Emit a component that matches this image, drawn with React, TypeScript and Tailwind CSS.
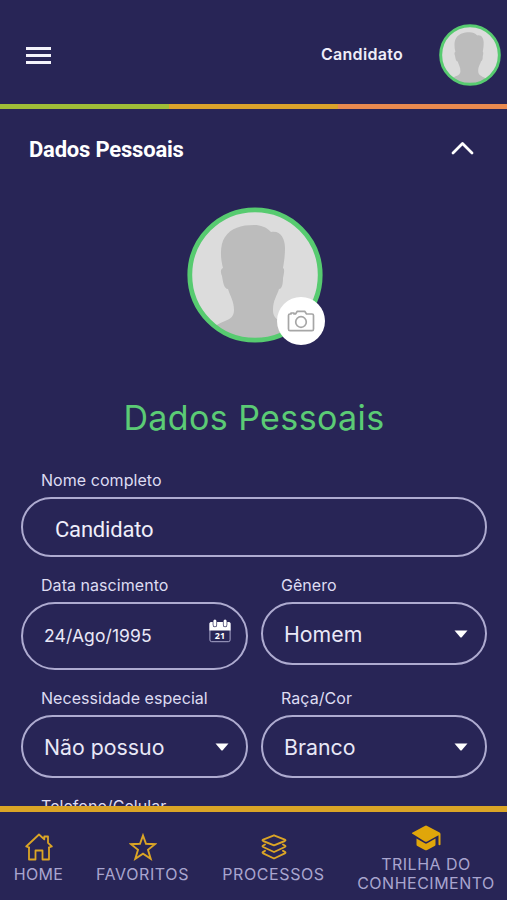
import React from "react";

const inter = "font-['Inter','Liberation_Sans',sans-serif]";
const roboto = "font-['Roboto','Liberation_Sans',sans-serif]";

function Avatar({ className, ring }: { className: string; ring: number }) {
  return (
    <svg className={className} viewBox="0 0 136 136" fill="none">
      <defs>
        <clipPath id="face">
          <circle cx="68" cy="68" r="64" />
        </clipPath>
      </defs>
      <circle cx="68" cy="68" r="65" fill="#dcdcdc" />
      <path
        clipPath="url(#face)"
        fill="#bcbcbc"
        d="M25 122C35 112 47 115 47 103C47 94 43 89 41 82C37 82 36 75 35 69C33 64 34 62 36 61C33 50 33 37 38 30C44 21 54 18 67 18C74 18 79 20 84 25C93 23 98 31 98 41C98 49 97 55 96 61C98 62 97 66 96 71C96 77 95 82 92 82C90 89 86 93 86 103C86 114 95 114 108 122V140H25Z"
      />
      <circle cx="68" cy="68" r={67.6 - ring / 2} stroke="#57cb70" strokeWidth={ring} />
    </svg>
  );
}

function Caret() {
  return (
    <svg className="h-2 w-[14px]" viewBox="0 0 14 8" fill="#fff">
      <path d="M.5.5H13.5L7.5 7.4Q7 7.8 6.5 7.4Z" />
    </svg>
  );
}

function Calendar() {
  return (
    <svg className="mb-[10px] h-[24px] w-[22px]" viewBox="0 0 22 24">
      <rect x=".9" y="3.5" width="20.2" height="19.2" rx="1.8" fill="none" stroke="#a9a6cb" strokeWidth="1" />
      <path d="M.5 11.4V4.6Q.5 3 2 3H20Q21.5 3 21.5 4.6V11.4Z" fill="#fff" />
      <path d="M5.9 2.5V6M16.1 2.5V6" stroke="#282556" strokeWidth="4.4" strokeLinecap="round" />
      <path d="M5.9 2V6M16.1 2V6" stroke="#fff" strokeWidth="3" strokeLinecap="round" />
      <text x="11" y="19.8" textAnchor="middle" fill="#fff" className="font-['Open_Sans',sans-serif] text-[9px] font-bold">21</text>
    </svg>
  );
}

function Label({ children, className = "" }: { children: React.ReactNode; className?: string }) {
  return <div className={`ml-5 h-5 text-[16px] leading-5 tracking-[0.05px] whitespace-nowrap text-[#dedcf2] ${className}`}>{children}</div>;
}

function Select({ value, className }: { value: string; className: string }) {
  return (
    <div className={`flex h-[63px] items-center justify-between rounded-full border-2 border-[#aeabd0] pr-[17px] pl-[21px] ${className}`}>
      <span className="text-[21.3px] leading-7 text-[#e9e8f7]">{value}</span>
      <Caret />
    </div>
  );
}

export default function App() {
  return (
    <div className={`flex h-[900px] w-[507px] flex-col overflow-hidden bg-[#282556] ${inter}`}>
      <header className="flex h-[104px] shrink-0 items-center pt-[6px] pr-[6px] pl-[26px]">
        <div className="flex w-[25px] flex-col gap-[4px]">
          <span className="h-[3px] bg-[#f4f3fb]" />
          <span className="h-[3px] bg-[#f4f3fb]" />
          <span className="h-[3px] bg-[#f4f3fb]" />
        </div>
        <span className="mb-[2px] ml-auto text-[16px] font-semibold tracking-[0.3px] text-[#eeedf9]">Candidato</span>
        <Avatar ring={6.5} className="ml-9 size-[62px]" />
      </header>
      <div className="grid h-[5px] shrink-0 grid-cols-3">
        <span className="bg-[#a0bd37]" />
        <span className="bg-[#dba32b]" />
        <span className="bg-[#e98a4f]" />
      </div>

      <main className="min-h-0 flex-1 overflow-hidden px-[21px]">
        <div className="flex h-[82px] items-center justify-between pr-[12px] pl-2">
          <h2 className={`mb-[2px] text-[22px] font-bold tracking-[-0.2px] text-white ${roboto}`}>Dados Pessoais</h2>
          <svg className="mb-1 h-[14px] w-[23px]" viewBox="0 0 23 14" fill="none" stroke="#fff" strokeWidth="2.8" strokeLinecap="round" strokeLinejoin="round">
            <path d="M2 12L11.5 2.5L21 12" />
          </svg>
        </div>

        <div className="mt-[16px] flex justify-center pl-[2px]">
          <div className="relative size-[136px]">
            <Avatar ring={4.8} className="size-[136px]" />
            <div className="absolute top-[90px] left-[90px] flex size-[48px] items-center justify-center rounded-full bg-white">
              <svg className="h-[22px] w-[28px]" viewBox="0 0 28 22" fill="none" stroke="#a6a6a6" strokeWidth="1.7" strokeLinejoin="round">
                <path d="M3 4H4V3H7V4H8.5L10.3 1.3H17.7L19.5 4H25Q26.5 4 26.5 5.5V19Q26.5 20.7 25 20.7H3Q1.5 20.7 1.5 19V5.5Q1.5 4 3 4Z" />
                <circle cx="14" cy="12" r="5.3" />
              </svg>
            </div>
          </div>
        </div>

        <h1 className="mt-[52px] pl-[1px] text-center text-[34px] leading-[46px] tracking-[0.4px] whitespace-nowrap text-[#5bcb75]">Dados Pessoais</h1>

        <Label className="mt-[29px]">Nome completo</Label>
        <div className={`mt-[7px] mr-[-1px] flex h-[60px] items-center rounded-full border-2 border-[#aeabd0] pt-[5px] pl-8 text-[22px] tracking-[-0.2px] text-[#efeefa] ${roboto}`}>
          Candidato
        </div>

        <div className="mt-[18px] grid h-[95px] grid-cols-[227px_226px] gap-x-[13px]">
          <div>
            <Label>Data nascimento</Label>
            <div className="mt-[7px] flex h-[68px] items-center justify-between rounded-full border-2 border-[#aeabd0] pr-[15px] pl-[21px]">
              <span className="text-[17.5px] tracking-[0.1px] text-[#e9e8f7]">24/Ago/1995</span>
              <Calendar />
            </div>
          </div>
          <div>
            <Label>Gênero</Label>
            <Select value="Homem" className="mt-[7px]" />
          </div>
        </div>

        <div className="mt-[18px] grid grid-cols-[227px_226px] gap-x-[13px]">
          <div>
            <Label>Necessidade especial</Label>
            <Select value="Não possuo" className="mt-[7px]" />
          </div>
          <div>
            <Label>Raça/Cor</Label>
            <Select value="Branco" className="mt-[7px]" />
          </div>
        </div>
        <Label className="mt-[18px]">Telefone/Celular</Label>
      </main>

      <nav className="flex h-[94px] shrink-0 items-start border-t-[6px] border-[#dba526] text-[16px] leading-[19px] tracking-[0.6px] whitespace-nowrap text-[#a9a5cf]">
        <div className="flex w-[77px] flex-col items-center pt-[21px]">
          <svg className="h-[28px] w-[28px]" viewBox="0 0 28 28" fill="none" stroke="#dba526" strokeWidth="1.8" strokeLinejoin="round" strokeLinecap="round">
            <path d="M4 14.5V26.5H10.5V17.5H17.5V26.5H24V14.5" />
            <path d="M4 14.5L1.2 13.5L14 1.5L19.3 6.3V3.5H23V9.8L26.8 13.5L24 14.5" />
          </svg>
          <span className="mt-1 tracking-[0.3px]">HOME</span>
        </div>
        <div className="flex w-[131px] flex-col items-center pt-[21px]">
          <svg className="h-[28px] w-[28px]" viewBox="0 0 28 28" fill="none" stroke="#dba526" strokeWidth="1.9">
            <path d="M14 2.5L17 10.8L26 11.2L19 16.8L21.7 25.8L14 20.7L6.3 25.8L9 16.8L2 11.2L11 10.8Z" />
          </svg>
          <span className="mt-1">FAVORITOS</span>
        </div>
        <div className="flex w-[131px] flex-col items-center pt-[21px]">
          <svg className="h-[28px] w-[28px]" viewBox="0 0 28 28" fill="none" stroke="#dba526" strokeWidth="1.9" strokeLinejoin="round" strokeLinecap="round">
            <path d="M14 2.3L24.8 6.6Q26.2 7.3 24.8 8L14 12.4L3.2 8Q1.8 7.3 3.2 6.6Z" />
            <path d="M5 11.5L3.2 12.5Q1.8 13.3 3.2 14L14 19L24.8 14Q26.2 13.3 24.8 12.5L23 11.5" />
            <path d="M5 17.8L3.2 18.8Q1.8 19.6 3.2 20.3L14 25.5L24.8 20.3Q26.2 19.6 24.8 18.8L23 17.8" />
          </svg>
          <span className="mt-1">PROCESSOS</span>
        </div>
        <div className="flex flex-1 flex-col items-center pt-[12px] pl-[6px] text-center">
          <svg className="h-[28px] w-[30px]" viewBox="0 0 30 28" fill="#e0a60a">
            <path d="M1 9.5Q.7 9.2 1.2 8.8L13.8 1.9Q15 1.3 16.2 1.9L28.6 8.4Q29.5 9 29.5 10V20.5Q29.5 21.3 28.5 21.3T27.5 20.5V11.2L16.2 17.4Q15 18 13.8 17.4Z" />
            <path d="M5.5 14.6V20.5Q5.5 21.5 6.4 22L13.8 26Q15 26.6 16.2 26L23.6 22Q24.5 21.5 24.5 20.5V14.6L16.2 19.3Q15 20 13.8 19.3Z" />
          </svg>
          <span className="mt-[3px] tracking-[0.5px]">TRILHA DO<br />CONHECIMENTO</span>
        </div>
      </nav>
    </div>
  );
}
